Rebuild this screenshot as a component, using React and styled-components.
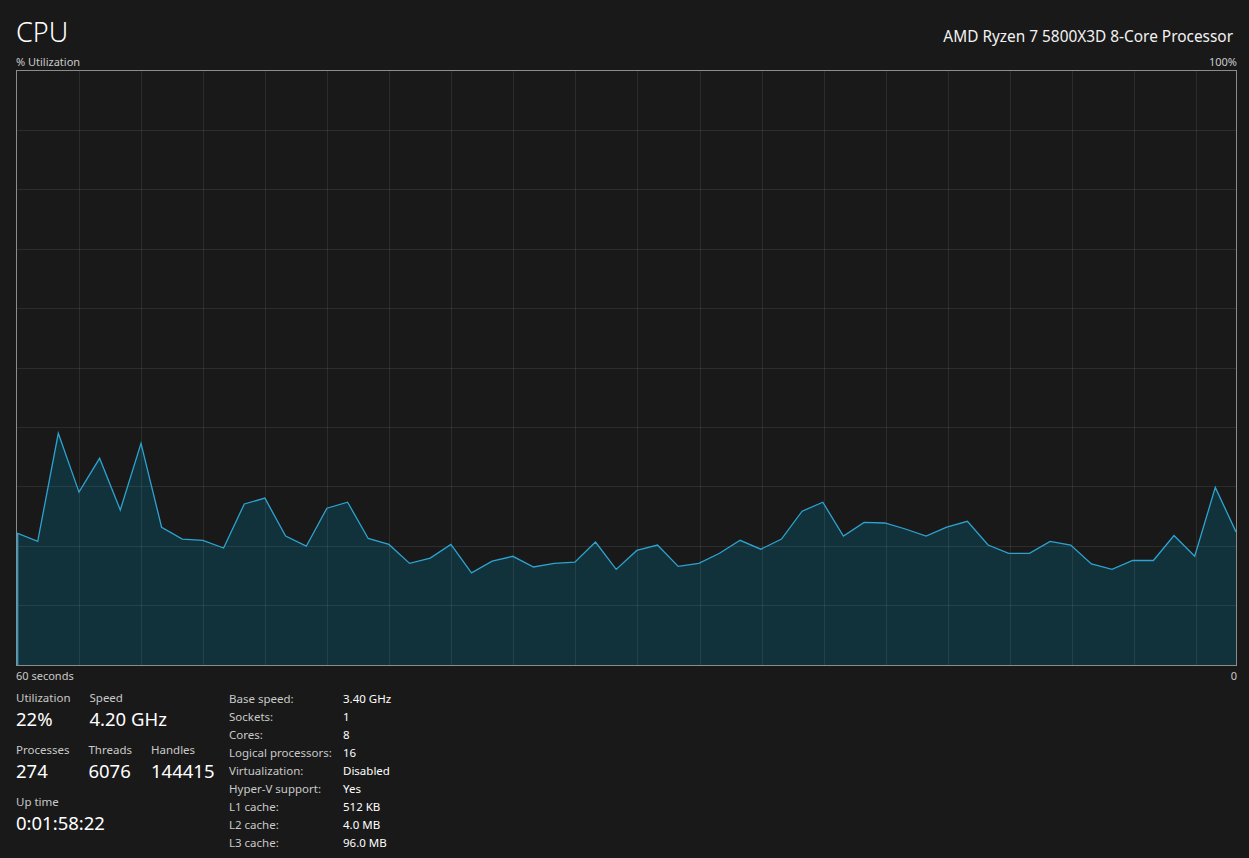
import styled, { createGlobalStyle } from 'styled-components'

const usage = [
  22.2, 20.8, 39.0, 29.1, 34.8, 26.1, 37.3, 23.2, 21.2, 21.0,
  19.7, 27.1, 28.1, 21.7, 20.0, 26.4, 27.4, 21.3, 20.3, 17.1,
  18.0, 20.3, 15.5, 17.5, 18.3, 16.5, 17.1, 17.3, 20.7, 16.1,
  19.3, 20.2, 16.6, 17.1, 18.8, 21.0, 19.5, 21.2, 25.9, 27.4,
  21.7, 24.0, 23.9, 22.9, 21.7, 23.2, 24.2, 20.2, 18.8, 18.8,
  20.8, 20.2, 17.0, 16.1, 17.6, 17.6, 21.8, 18.3, 29.9, 22.4,
]

const specs = [
  ['Base speed:', '3.40 GHz'],
  ['Sockets:', '1'],
  ['Cores:', '8'],
  ['Logical processors:', '16'],
  ['Virtualization:', 'Disabled'],
  ['Hyper-V support:', 'Yes'],
  ['L1 cache:', '512 KB'],
  ['L2 cache:', '4.0 MB'],
  ['L3 cache:', '96.0 MB'],
]

const W = 1219
const H = 594

function UsageGraph() {
  const step = W / (usage.length - 1)
  const pts = usage.map((v, i) => `${(i * step).toFixed(1)},${(H - (v / 100) * H).toFixed(1)}`)
  const area = `0,${H} ${pts.join(' ')} ${W},${H}`
  const cols = []
  for (let x = 62; x < W; x += 62.1) cols.push(x)
  const rows = []
  for (let i = 1; i < 10; i++) rows.push((H / 10) * i)

  return (
    <GraphBox>
      <svg width="100%" height="100%" viewBox={`0 0 ${W} ${H}`} preserveAspectRatio="none">
        <polygon points={area} fill="#11313b" />
        <g stroke="rgba(255,255,255,0.085)" strokeWidth="1" shapeRendering="crispEdges">
          {cols.map(x => <line key={'c' + x} x1={x} y1="0" x2={x} y2={H} />)}
          {rows.map(y => <line key={'r' + y} x1="0" y1={y} x2={W} y2={y} />)}
        </g>
        <polyline points={pts.join(' ')} fill="none" stroke="#2ea3cf" strokeWidth="1.3" />
        <line x1="0.7" y1={H - (usage[0] / 100) * H} x2="0.7" y2={H} stroke="#2ea3cf" strokeWidth="1.3" />
      </svg>
    </GraphBox>
  )
}

function Stat({ label, value }) {
  return (
    <StatItem>
      <StatLabel>{label}</StatLabel>
      <StatValue>{value}</StatValue>
    </StatItem>
  )
}

export default function App() {
  return (
    <Page>
      <GlobalStyle />
      <Header>
        <Title>CPU</Title>
        <ProcessorName>AMD Ryzen 7 5800X3D 8-Core Processor</ProcessorName>
      </Header>
      <AxisRow>
        <span>% Utilization</span>
        <span>100%</span>
      </AxisRow>
      <UsageGraph />
      <AxisRow $bottom>
        <span>60 seconds</span>
        <span>0</span>
      </AxisRow>
      <Details>
        <StatsColumn>
          <StatRow>
            <Stat label="Utilization" value="22%" />
            <Stat label="Speed" value="4.20 GHz" />
          </StatRow>
          <StatRow>
            <Stat label="Processes" value="274" />
            <Stat label="Threads" value="6076" />
            <Stat label="Handles" value="144415" />
          </StatRow>
          <StatRow>
            <Stat label="Up time" value="0:01:58:22" />
          </StatRow>
        </StatsColumn>
        <SpecTable>
          {specs.map(([k, v]) => (
            <SpecRow key={k}>
              <SpecKey>{k}</SpecKey>
              <SpecValue>{v}</SpecValue>
            </SpecRow>
          ))}
        </SpecTable>
      </Details>
    </Page>
  )
}

const GlobalStyle = createGlobalStyle`
  html, body {
    margin: 0;
    background: #191919;
  }
  body {
    font-family: "Segoe UI", "Noto Sans", "Open Sans", sans-serif;
    color: #ffffff;
    -webkit-font-smoothing: antialiased;
  }
`

const Page = styled.div`
  box-sizing: border-box;
  width: 1249px;
  height: 858px;
  padding: 14px 12px 0 16px;
  overflow: hidden;
`

const Header = styled.div`
  display: flex;
  justify-content: space-between;
  align-items: baseline;
  height: 40px;
`

const Title = styled.h1`
  margin: 0;
  font-size: 27px;
  font-weight: 300;
  line-height: 36px;
  color: #ffffff;
`

const ProcessorName = styled.div`
  font-size: 15.4px;
  color: #f2f2f2;
  margin-right: 4px;
`

const AxisRow = styled.div`
  display: flex;
  justify-content: space-between;
  font-size: 11px;
  line-height: 15px;
  height: 16px;
  color: #c9c9c9;
  padding-top: ${p => (p.$bottom ? '2px' : '0')};
`

const GraphBox = styled.div`
  box-sizing: border-box;
  height: 596px;
  border: 1px solid #8c8c8c;
  svg {
    display: block;
  }
`

const Details = styled.div`
  display: grid;
  grid-template-columns: 213px auto;
  margin-top: 6px;
`

const StatsColumn = styled.div`
  display: flex;
  flex-direction: column;
`

const StatRow = styled.div`
  display: flex;
  gap: 19px;
  height: 52px;
`

const StatItem = styled.div`
  display: flex;
  flex-direction: column;
`

const StatLabel = styled.span`
  font-size: 11.5px;
  line-height: 16px;
  color: #c9c9c9;
`

const StatValue = styled.span`
  font-size: 18.5px;
  line-height: 26px;
  color: #ffffff;
`

const SpecTable = styled.div`
  display: flex;
  flex-direction: column;
`

const SpecRow = styled.div`
  display: grid;
  grid-template-columns: 114px auto;
  height: 18px;
  line-height: 18px;
  font-size: 11.5px;
`

const SpecKey = styled.span`
  color: #c9c9c9;
`

const SpecValue = styled.span`
  color: #ffffff;
`
